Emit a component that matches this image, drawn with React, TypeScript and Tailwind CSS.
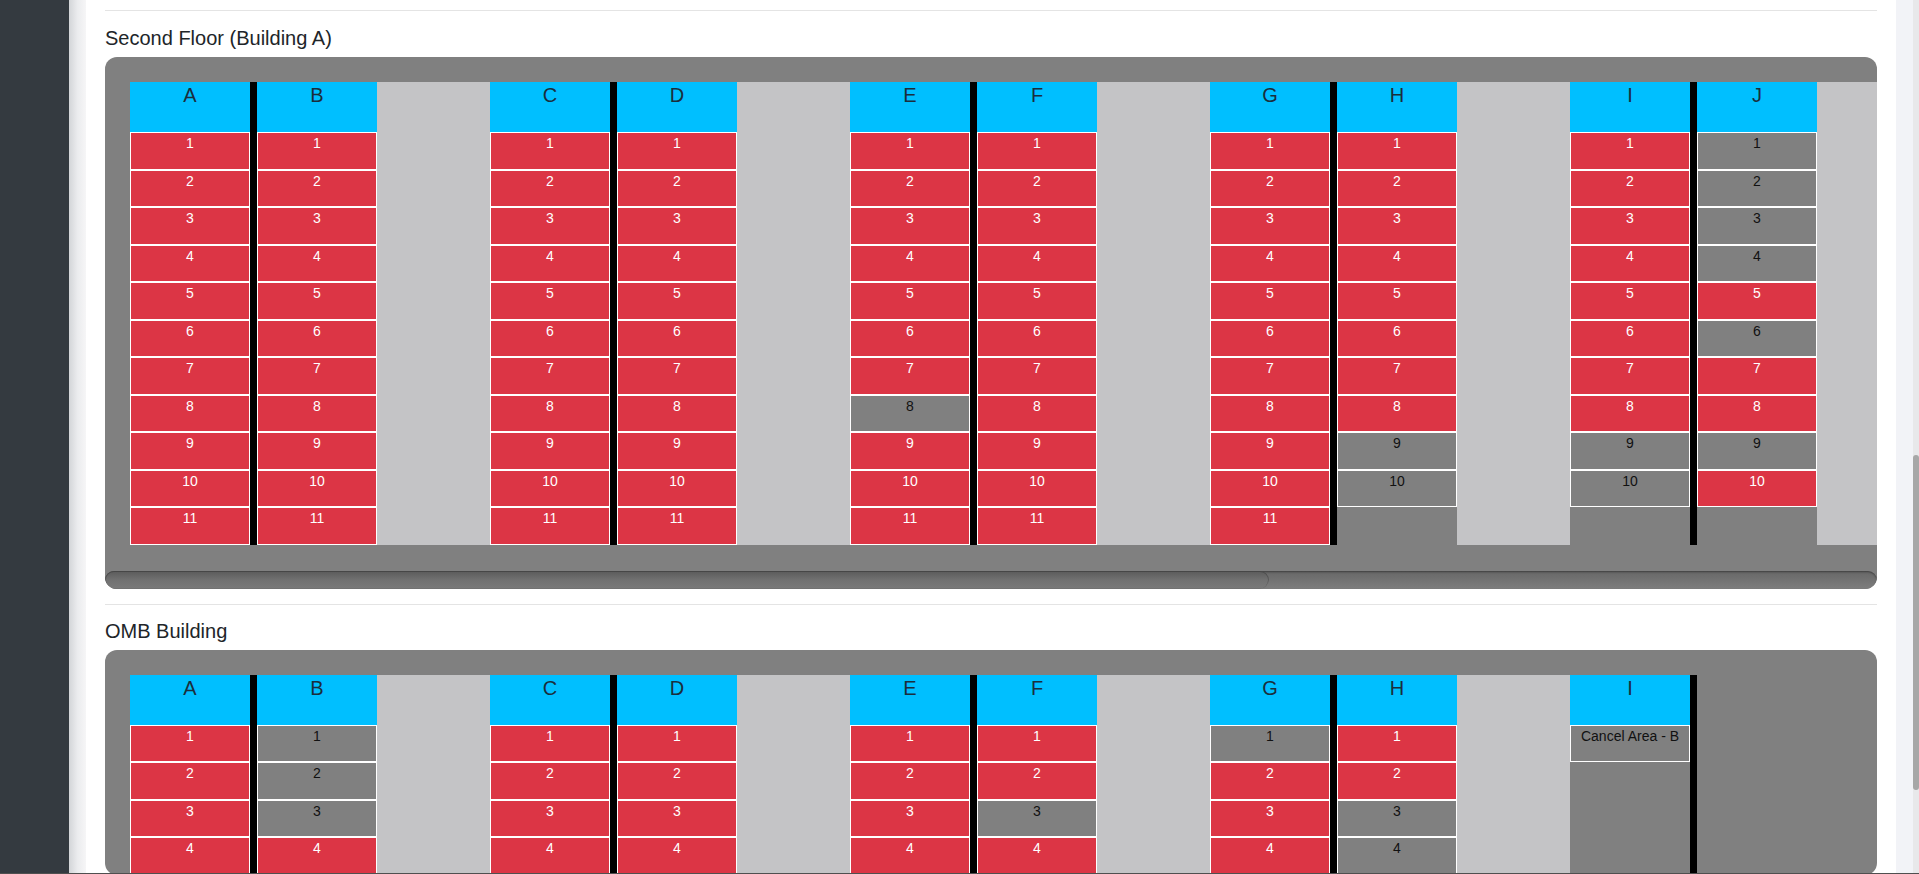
type Seat = { label: string; open: boolean };
type Column = { name: string; seats: Seat[] } | null;
type Pair = { left: Column; right: Column; aisle: boolean };

// Build a run of numbered seats; the listed numbers are the open (grey) ones
const seats = (count: number, open: number[] = []): Seat[] =>
  Array.from({ length: count }, (_, i) => ({
    label: String(i + 1),
    open: open.includes(i + 1),
  }));

const secondFloor: Pair[] = [
  { left: { name: 'A', seats: seats(11) }, right: { name: 'B', seats: seats(11) }, aisle: true },
  { left: { name: 'C', seats: seats(11) }, right: { name: 'D', seats: seats(11) }, aisle: true },
  { left: { name: 'E', seats: seats(11, [8]) }, right: { name: 'F', seats: seats(11) }, aisle: true },
  { left: { name: 'G', seats: seats(11) }, right: { name: 'H', seats: seats(10, [9, 10]) }, aisle: true },
  { left: { name: 'I', seats: seats(10, [9, 10]) }, right: { name: 'J', seats: seats(10, [1, 2, 3, 4, 6, 9]) }, aisle: true },
];

const ombBuilding: Pair[] = [
  { left: { name: 'A', seats: seats(4) }, right: { name: 'B', seats: seats(4, [1, 2, 3]) }, aisle: true },
  { left: { name: 'C', seats: seats(4) }, right: { name: 'D', seats: seats(4) }, aisle: true },
  { left: { name: 'E', seats: seats(4) }, right: { name: 'F', seats: seats(4, [3]) }, aisle: true },
  { left: { name: 'G', seats: seats(4, [1]) }, right: { name: 'H', seats: seats(4, [3, 4]) }, aisle: true },
  { left: { name: 'I', seats: [{ label: 'Cancel Area - B', open: true }] }, right: null, aisle: false },
];

const SeatColumn = ({ col }: { col: Column }) => (
  <div className="w-[120px] shrink-0 flex flex-col">
    {col && (
      <>
        <div className="h-[50px] pt-px bg-[#00bfff] text-center text-[20px] leading-[24px] text-[#1b2e3c]">
          {col.name}
        </div>
        {col.seats.map((s) => (
          <div
            key={s.label}
            className={`h-[37.5px] border border-white text-center text-[14px] leading-[21px] ${
              s.open ? 'bg-[#808080] text-[#111]' : 'bg-[#dc3545] text-white'
            }`}
          >
            {s.label}
          </div>
        ))}
      </>
    )}
  </div>
);

const SeatMap = ({ pairs, scroll }: { pairs: Pair[]; scroll?: boolean }) => (
  <div className="bg-[#808080] rounded-[12px] overflow-hidden">
    <div className={`pl-[25px] pt-[25px] overflow-hidden ${scroll ? 'pb-[26px]' : ''}`}>
      <div className="flex w-max">
        {pairs.map((p, i) => (
          <div key={i} className="flex">
            <SeatColumn col={p.left} />
            <div className="w-[7px] shrink-0 bg-black" />
            <SeatColumn col={p.right} />
            {p.aisle && <div className="w-[113px] shrink-0 bg-[#c4c4c6]" />}
          </div>
        ))}
      </div>
    </div>
    {scroll && (
      <div className="h-[18px] rounded-[9px] bg-linear-to-b from-[#676767] to-[#7e7e7e] shadow-[inset_0_1px_2px_rgba(0,0,0,0.4)]">
        <div className="w-[1164px] h-full rounded-[9px] bg-linear-to-b from-[#5b5b5b] via-[#717171] to-[#7a7a7a] shadow-[inset_0_0_0_1px_rgba(0,0,0,0.22),inset_0_-1px_0_rgba(255,255,255,0.18)]" />
      </div>
    )}
  </div>
);

const Section = ({ title, children }: { title: string; children: React.ReactNode }) => (
  <>
    <div className="text-[20px] leading-[24px] text-[#212529]">{title}</div>
    {children}
  </>
);

export default function App() {
  return (
    <div className="w-[1919px] h-[874px] overflow-hidden flex flex-col font-['Liberation_Sans',Arial,sans-serif]">
      <div className="flex flex-1 min-h-0">
        {/* sidebar */}
        <div className="w-[69px] shrink-0 bg-[#343a40]" />
        <div className="w-[17px] shrink-0 bg-linear-to-r from-[#d3d5d8] via-[#ebecee] to-[#f6f6f7]" />

        {/* card */}
        <div className="w-[1810px] shrink-0 bg-white flex flex-col">
          <div className="h-[3px] bg-[#ebebeb]" />
          <div className="px-[19px]">
            <div className="mt-[10px] h-px bg-[#e4e4e4]" />
            <div className="mt-[15px]">
              <Section title="Second Floor (Building A)">
                <div className="mt-[7px]">
                  <SeatMap pairs={secondFloor} scroll />
                </div>
              </Section>
            </div>
            <div className="mt-[15px] h-px bg-[#e4e4e4]" />
            <div className="mt-[14px]">
              <Section title="OMB Building">
                <div className="mt-[7px]">
                  <SeatMap pairs={ombBuilding} />
                </div>
              </Section>
            </div>
          </div>
        </div>

        <div className="w-[17px] shrink-0 bg-[#f2f3f7]" />
        {/* page scrollbar */}
        <div className="w-[6px] shrink-0 bg-[#e8e8ea] pt-[455px]">
          <div className="h-[335px] rounded-full bg-[#a7a7a7]" />
        </div>
      </div>
      <div className="h-px bg-[#4f4f4f]" />
    </div>
  );
}
